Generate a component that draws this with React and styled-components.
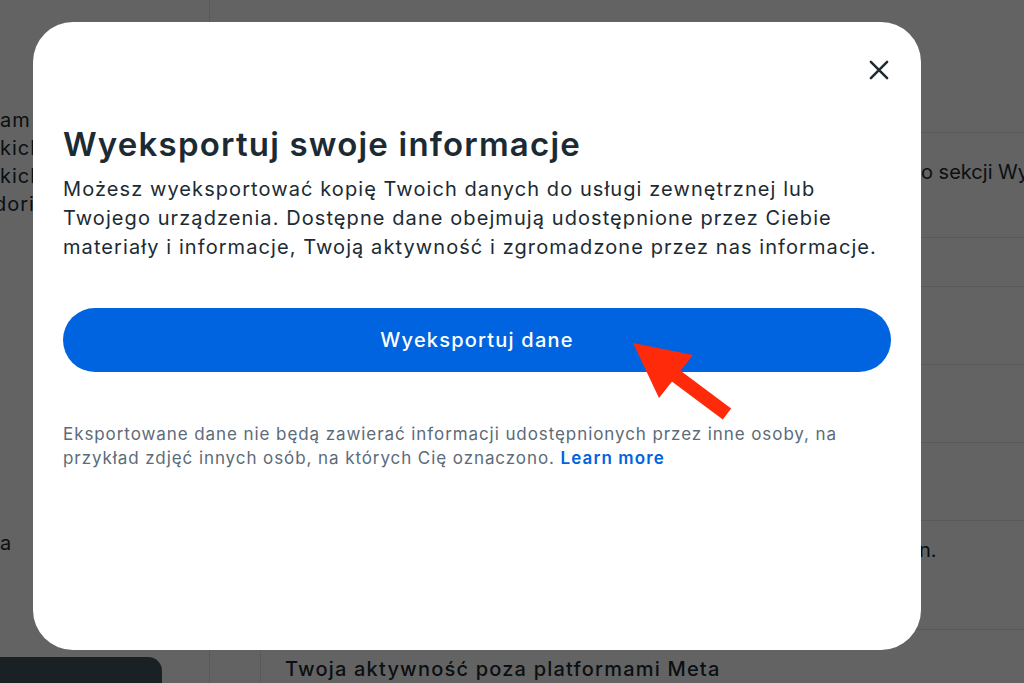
// External Dependencies
import React from 'react';
import styled, { createGlobalStyle } from 'styled-components';

// Local Variables
const GlobalStyle = createGlobalStyle`
  html, body {
    margin: 0;
    padding: 0;
    overflow: hidden;
  }
  body {
    font-family: Inter, "Noto Sans", sans-serif;
    color: #1c2b33;
    background: #ffffff;
  }
`;

const Page = styled.div`
  position: relative;
  display: flex;
  width: 1024px;
  height: 683px;
  overflow: hidden;
  background: #ffffff;
`;

const Sidebar = styled.aside`
  display: flex;
  flex-direction: column;
  width: 210px;
  flex-shrink: 0;
  padding-top: 106px;
  border-right: 1px solid #e4e6eb;
  box-sizing: border-box;
  overflow: hidden;
`;

const SideLine = styled.div`
  font-size: 20px;
  line-height: 28px;
  letter-spacing: 1px;
  white-space: nowrap;
  margin-left: ${p => p.shift || 0}px;
  margin-top: ${p => p.gap || 0}px;
  color: #1c2b33;
`;

const DarkButton = styled.div`
  margin-top: auto;
  width: 162px;
  height: 26px;
  background: #455561;
  border-radius: 0 14px 0 0;
`;

const Main = styled.main`
  display: flex;
  flex-direction: column;
  flex: 1;
  min-width: 0;
  padding-left: 50px;
`;

const Row = styled.div`
  display: flex;
  height: ${p => p.h}px;
  border-bottom: 1px solid #e4e6eb;
  box-sizing: border-box;
  padding-top: ${p => p.pt || 0}px;
  overflow: hidden;
`;

const Spacer = styled.span`
  width: ${p => p.w}px;
  flex-shrink: 0;
`;

const RowText = styled.span`
  font-size: 20px;
  line-height: 28px;
  letter-spacing: 0;
  white-space: nowrap;
`;

const BottomSection = styled.section`
  flex: 1;
  border-left: 1px solid #e4e6eb;
  padding: 25px 0 0 24px;
`;

const SectionTitle = styled.h3`
  margin: 0;
  font-size: 20px;
  line-height: 28px;
  font-weight: 500;
  letter-spacing: 1.2px;
  white-space: nowrap;
`;

const Overlay = styled.div`
  position: absolute;
  inset: 0;
  display: flex;
  align-items: flex-start;
  padding: 22px 0 0 33px;
  background: rgba(0, 0, 0, 0.61);
`;

const Modal = styled.div`
  display: flex;
  flex-direction: column;
  width: 888px;
  height: 628px;
  box-sizing: border-box;
  padding: 0 30px;
  background: #ffffff;
  border-radius: 40px;
`;

const Header = styled.div`
  display: flex;
  justify-content: flex-end;
  padding-top: 34px;
`;

const CloseButton = styled.button`
  display: flex;
  align-items: center;
  justify-content: center;
  width: 28px;
  height: 28px;
  margin-right: -2px;
  padding: 0;
  border: none;
  background: transparent;
  color: #1c2b33;
  cursor: pointer;
`;

const Title = styled.h2`
  margin: 40px 0 0;
  font-size: 33px;
  line-height: 40px;
  font-weight: 600;
  letter-spacing: 1.2px;
  color: #1c2b33;
`;

const Description = styled.p`
  margin: 11px 0 0;
  font-size: 20px;
  line-height: 29px;
  letter-spacing: 1.08px;
  color: #1c2b33;
`;

const PrimaryButton = styled.button`
  margin-top: 46px;
  height: 64px;
  width: 100%;
  border: none;
  border-radius: 32px;
  background: #0064e0;
  color: #ffffff;
  font-family: Inter, "Noto Sans", sans-serif;
  font-size: 20px;
  font-weight: 500;
  letter-spacing: 1.2px;
  cursor: pointer;
`;

const Note = styled.p`
  margin: 50px 0 0;
  font-size: 17px;
  line-height: 24px;
  letter-spacing: 0.92px;
  color: #5c6b79;
`;

const LearnMore = styled.a`
  color: #0064e0;
  font-weight: 600;
  letter-spacing: 1.1px;
  text-decoration: none;
`;

const ArrowMark = styled.svg`
  position: absolute;
  left: 600px;
  top: 320px;
  width: 150px;
  height: 110px;
  pointer-events: none;
`;

// Component Definition
function App() {
  return (
    <>
      <GlobalStyle />
      <Page>
        <Sidebar>
          <SideLine>am</SideLine>
          <SideLine>kich</SideLine>
          <SideLine>kich</SideLine>
          <SideLine shift={-6}>dori</SideLine>
          <SideLine gap={311}>a</SideLine>
          <DarkButton />
        </Sidebar>
        <Main>
          <Row h={133} />
          <Row h={105} pt={25}>
            <Spacer w={661} />
            <RowText>o sekcji Wyeksportuj</RowText>
          </Row>
          <Row h={49} />
          <Row h={79} />
          <Row h={78} />
          <Row h={78} />
          <Row h={109} pt={15}>
            <Spacer w={659} />
            <RowText>n.</RowText>
          </Row>
          <BottomSection>
            <SectionTitle>Twoja aktywność poza platformami Meta</SectionTitle>
          </BottomSection>
        </Main>

        <Overlay>
          <Modal role="dialog" aria-modal="true">
            <Header>
              <CloseButton aria-label="Zamknij">
                <svg width="26" height="26" viewBox="0 0 24 24" fill="none" stroke="currentColor" strokeWidth="2.3" strokeLinecap="round">
                  <path d="M4.5 4.5l15 15M19.5 4.5l-15 15" />
                </svg>
              </CloseButton>
            </Header>
            <Title>Wyeksportuj swoje informacje</Title>
            <Description>
              Możesz wyeksportować kopię Twoich danych do usługi zewnętrznej lub
              Twojego urządzenia. Dostępne dane obejmują udostępnione przez Ciebie
              materiały i informacje, Twoją aktywność i zgromadzone przez nas informacje.
            </Description>
            <PrimaryButton>Wyeksportuj dane</PrimaryButton>
            <Note>
              Eksportowane dane nie będą zawierać informacji udostępnionych przez inne osoby, na
              przykład zdjęć innych osób, na których Cię oznaczono. <LearnMore href="#">Learn more</LearnMore>
            </Note>
          </Modal>
        </Overlay>

        <ArrowMark viewBox="0 0 150 110">
          <polygon points="33,23 93,35 59,78" fill="#ff2a0a" />
          <line x1="68" y1="50" x2="127" y2="94" stroke="#ff2a0a" strokeWidth="14" />
        </ArrowMark>
      </Page>
    </>
  );
}

export default App;
